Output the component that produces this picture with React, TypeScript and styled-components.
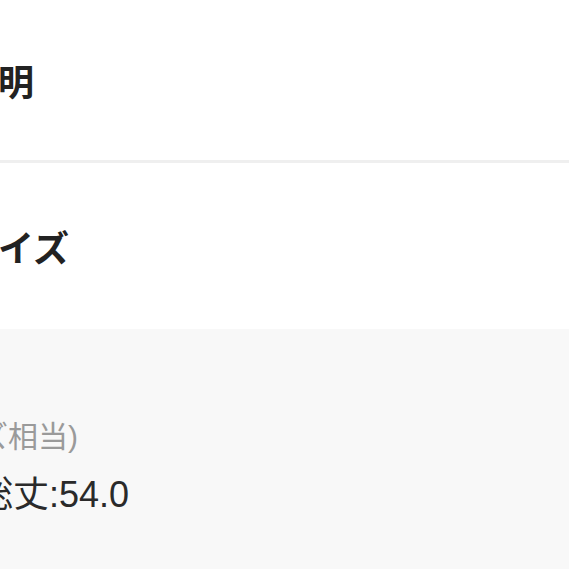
import { createGlobalStyle, styled } from 'styled-components';

const GlobalStyle = createGlobalStyle`
  html, body {
    margin: 0;
    padding: 0;
    background: #ffffff;
    overflow: hidden;
  }
  body {
    font-family: "Liberation Sans", "Noto Sans CJK JP", sans-serif;
  }
`;

const Page = styled.div`
  width: 569px;
  height: 569px;
  display: flex;
  flex-direction: column;
  overflow: hidden;
`;

const Section = styled.section<{ $height: number }>`
  height: ${({ $height }) => $height}px;
  display: flex;
  align-items: center;
  background: #ffffff;
`;

const Divider = styled.div`
  height: 3px;
  background: #efefef;
`;

const Heading = styled.h2<{ $indent: number }>`
  margin: 0 0 0 ${({ $indent }) => $indent}px;
  font-family: "Noto Sans CJK JP", sans-serif;
  font-size: 36px;
  line-height: 48px;
  font-weight: 700;
  color: #222222;
  white-space: nowrap;
`;

const Detail = styled.div`
  flex: 1;
  background: #f8f8f8;
  padding-top: 87px;
  display: flex;
  flex-direction: column;
  gap: 12px;
`;

const Note = styled.p<{ $indent: number }>`
  margin: 0 0 0 ${({ $indent }) => $indent}px;
  font-size: 30px;
  line-height: 42px;
  color: #9a9a9a;
  white-space: nowrap;
`;

const Spec = styled.p<{ $indent: number }>`
  margin: 0 0 0 ${({ $indent }) => $indent}px;
  font-size: 36px;
  line-height: 50px;
  color: #2a2a2a;
  white-space: nowrap;
`;

export default function App() {
  return (
    <>
      <GlobalStyle />
      <Page>
        <Section $height={160}>
          <Heading $indent={-38}>説明</Heading>
        </Section>
        <Divider />
        <Section $height={166}>
          <Heading $indent={-38}>サイズ</Heading>
        </Section>
        <Detail>
          <Note $indent={-116}>(Mサイズ相当)</Note>
          <Spec $indent={-23}>総丈:54.0</Spec>
        </Detail>
      </Page>
    </>
  );
}
